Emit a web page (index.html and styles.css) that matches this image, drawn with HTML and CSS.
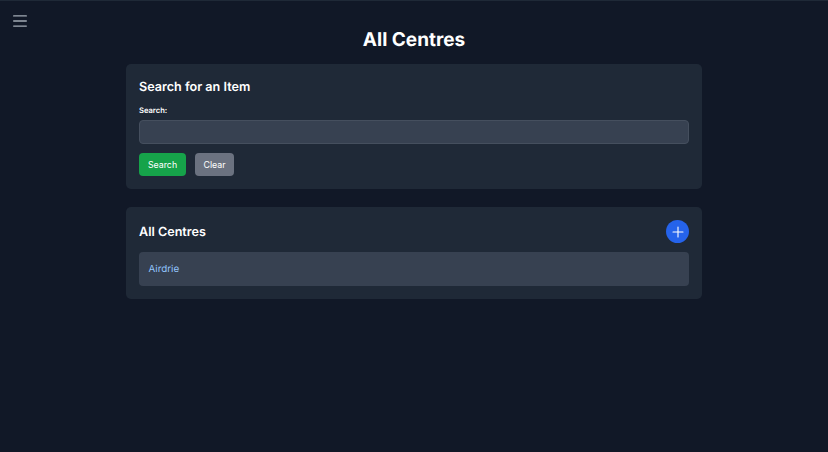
FILE: index.html
```html
<!DOCTYPE html>
<html>
<head>
	<title>All Centres</title>
	<link rel="stylesheet" href="styles.css">
</head>
<body>
<div class="topBar">
	<button class="menuBtn" aria-label="menu">
		<svg width="14" height="12" viewBox="0 0 14 12" fill="none" stroke="#a3aab5" stroke-width="1.4" stroke-linecap="round"><path d="M.7 .9h12.6M.7 6h12.6M.7 11.1h12.6"/></svg>
	</button>
</div>
<h1 class="pageTitle">All Centres</h1>
<main class="wrap">
	<section class="card searchCard">
		<h2 class="cardTitle">Search for an Item</h2>
		<label class="fieldLabel" for="search">Search:</label>
		<input class="searchInput" id="search" type="text">
		<div class="actions">
			<button class="btn btnGreen">Search</button>
			<button class="btn btnGray">Clear</button>
		</div>
	</section>
	<section class="card listCard">
		<div class="cardHead">
			<h2 class="cardTitle">All Centres</h2>
			<button class="addBtn" aria-label="add">
				<svg width="12" height="12" viewBox="0 0 12 12" fill="none" stroke="#fff" stroke-width="1.1" stroke-linecap="round"><path d="M6 1v10M1 6h10"/></svg>
			</button>
		</div>
		<div class="listItem"><a href="#">Airdrie</a></div>
	</section>
</main>
</body>
</html>
```

FILE: styles.css
```css
*{margin: 0;padding: 0;box-sizing: border-box;}
body{
	width: 828px;
	height: 452px;
	overflow: hidden;
	background: #111827;
	font-family: Inter, "Liberation Sans", sans-serif;
	color: #fff;
	text-rendering: geometricPrecision;
}
button{border: none;font-family: inherit;}
.topBar{height: 28px;padding: 14px 0 0 13px;border-top: 1px solid #1f2937;}
.menuBtn{display: block;background: none;width: 14px;height: 12px;}
.menuBtn svg{display: block;}
.pageTitle{
	font-size: 19px;
	line-height: 23px;
	font-weight: 700;
	text-align: center;
}
.wrap{width: 576px;margin: 13px auto 0;}
.card{background: #1f2937;border-radius: 5px;padding: 13px;}
.searchCard{height: 125px;margin-bottom: 18px;}
.listCard{height: 92px;}
.cardTitle{font-size: 12.6px;line-height: 21px;font-weight: 600;}
.cardHead .cardTitle{padding-top: 2px;}
.fieldLabel{display: block;margin-top: 7px;font-size: 7.6px;line-height: 12px;font-weight: 600;}
.searchInput{
	display: block;
	width: 100%;
	height: 24px;
	margin-top: 3px;
	background: #374151;
	border: 1px solid #454f5e;
	border-radius: 4px;
}
.actions{display: flex;gap: 9px;margin-top: 9px;}
.btn{height: 23px;border-radius: 4px;color: #fff;font-size: 8.8px;}
.btnGreen{width: 47px;background: #16a34a;}
.btnGray{width: 39px;background: #6b7280;}
.cardHead{display: flex;justify-content: space-between;align-items: center;height: 23px;margin-bottom: 9px;}
.addBtn{display: flex;align-items: center;justify-content: center;width: 23px;height: 23px;border-radius: 50%;background: #2563eb;}
.listItem{height: 34px;padding: 1px 9.5px 0;background: #374151;border-radius: 4px;display: flex;align-items: center;}
.listItem a{color: #93c5fd;font-size: 9.8px;text-decoration: none;}
```
